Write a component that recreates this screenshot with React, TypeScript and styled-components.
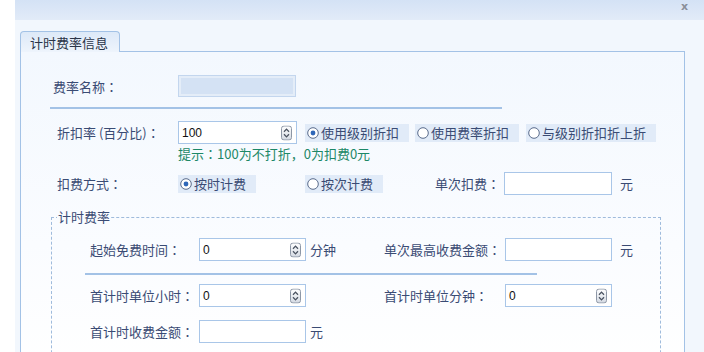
import React from 'react';
import styled, { createGlobalStyle } from 'styled-components';

const LABEL = '#3a4b74';
const LINE = '#a3c2e6';

const GlobalStyle = createGlobalStyle`
  html, body {
    margin: 0;
    padding: 0;
    background: #ffffff;
    overflow: hidden;
  }
  body {
    font-family: "Noto Sans CJK SC", "Noto Sans", sans-serif;
    font-size: 13px;
  }
`;

const Page = styled.div`
  width: 704px;
  height: 352px;
  display: flex;
  overflow: hidden;
  background: #ffffff;
`;

const Gutter = styled.div`
  width: 15px;
  flex: none;
  background: #ffffff;
`;

const Dialog = styled.div`
  flex: 1;
  display: flex;
  flex-direction: column;
  background: #f2f7fd;
`;

const TitleBar = styled.div`
  height: 20px;
  flex: none;
  display: flex;
  justify-content: flex-end;
  align-items: flex-start;
  padding-right: 16px;
  background: linear-gradient(#d4e2f5, #e2ebf8);
`;

const Close = styled.span`
  font-family: "DejaVu Sans", sans-serif;
  font-size: 11px;
  font-weight: bold;
  line-height: 14px;
  color: #8a8f99;
`;

const Body = styled.div`
  flex: 1;
  padding: 10px 19px 0 5px;
  display: flex;
  flex-direction: column;
`;

const TabStrip = styled.div`
  height: 21px;
  display: flex;
  align-items: flex-end;
`;

const Tab = styled.div`
  width: 100px;
  height: 21px;
  box-sizing: border-box;
  border: 1px solid ${LINE};
  border-bottom: none;
  border-radius: 4px 4px 0 0;
  background: linear-gradient(#dde9f8, #eef4fc);
  padding-left: 9px;
  line-height: 21px;
  color: #2a3448;
  margin-bottom: -1px;
  position: relative;
  z-index: 1;
`;

const Panel = styled.div`
  flex: 1;
  border: 1px solid ${LINE};
  border-bottom: none;
  background: linear-gradient(#f3f8fe, #fafcff 60%, #ffffff);
  display: flex;
  flex-direction: column;
`;

const Row = styled.div<{ $pad?: number; $top?: number; $h?: number }>`
  display: flex;
  align-items: center;
  height: ${p => p.$h ?? 23}px;
  margin-top: ${p => p.$top ?? 0}px;
  padding-left: ${p => p.$pad ?? 0}px;
  color: ${LABEL};
  white-space: nowrap;
`;

const Label = styled.span<{ $w: number }>`
  width: ${p => p.$w}px;
  flex: none;
  color: ${LABEL};
`;

const Colon = styled.span`
  font-family: "Noto Sans CJK TC", "Noto Sans CJK SC", sans-serif;
`;

const Cell = styled.div<{ $w: number }>`
  width: ${p => p.$w}px;
  flex: none;
  display: flex;
  align-items: center;
`;

const Rule = styled.div<{ $left: number; $top: number }>`
  width: 452px;
  height: 2px;
  margin-left: ${p => p.$left}px;
  margin-top: ${p => p.$top}px;
  background: ${LINE};
`;

const Box = styled.div<{ $w: number; $h?: number; $fill?: boolean }>`
  width: ${p => p.$w}px;
  height: ${p => p.$h ?? 23}px;
  box-sizing: border-box;
  flex: none;
  position: relative;
  border: 1px solid ${p => (p.$fill ? '#c3d6ee' : '#a9c6e8')};
  background: ${p => (p.$fill ? '#d4e2f4' : '#ffffff')};
  box-shadow: ${p => (p.$fill ? 'inset 0 0 0 2px #e4edf8' : 'none')};
  display: flex;
  align-items: center;
  padding-left: 3px;
  font-family: "Liberation Sans", Arial, sans-serif;
  font-size: 12px;
  color: #111;
`;

const SpinHolder = styled.span`
  position: absolute;
  right: 4px;
  top: 50%;
  transform: translateY(-50%);
  display: flex;
`;

const Unit = styled.span<{ $gap: number }>`
  margin-left: ${p => p.$gap}px;
  color: ${LABEL};
`;

const Chip = styled.span<{ $gap?: number }>`
  height: 18px;
  display: inline-flex;
  align-items: center;
  gap: 2px;
  padding: 0 10px 0 2px;
  margin-left: ${p => p.$gap ?? 0}px;
  background: #e1ebf8;
  color: ${LABEL};
`;

const Hint = styled.div`
  height: 18px;
  margin-bottom: 2px;
  display: flex;
  align-items: center;
  padding-left: 157px;
  color: #1d8867;
`;

const Fieldset = styled.fieldset`
  width: 610px;
  box-sizing: border-box;
  margin: 14px 0 0 30px;
  padding: 0 0 30px 0;
  border: 1px dashed #9fbbdc;
  border-bottom: none;
  min-width: 0;
`;

const Legend = styled.legend`
  margin-left: 5px;
  padding: 0 1px;
  line-height: 16px;
  color: ${LABEL};
`;

const Spinner = () => (
  <SpinHolder>
    <svg width="11" height="15" viewBox="0 0 11 15">
      <defs>
        <linearGradient id="sp" x1="0" y1="0" x2="0" y2="1">
          <stop offset="0" stopColor="#ffffff" />
          <stop offset="1" stopColor="#d3d9e2" />
        </linearGradient>
      </defs>
      <rect x="0.5" y="0.5" width="10" height="14" rx="2.5" fill="url(#sp)" stroke="#8d97a6" />
      <path d="M3 6.2 L5.5 3.6 L8 6.2" fill="none" stroke="#4a5260" strokeWidth="1.3" />
      <path d="M3 8.8 L5.5 11.4 L8 8.8" fill="none" stroke="#4a5260" strokeWidth="1.3" />
    </svg>
  </SpinHolder>
);

const Radio = ({ on }: { on?: boolean }) => (
  <svg width="12" height="12" viewBox="0 0 12 12">
    <circle cx="6" cy="6" r="5.3" fill="#ffffff" stroke="#5a6c8c" strokeWidth="1" />
    {on && <circle cx="6" cy="6" r="2.4" fill="#2f67b8" />}
  </svg>
);

const Field = ({ w, value, spin }: { w: number; value?: string; spin?: boolean }) => (
  <Box $w={w}>
    {value}
    {spin && <Spinner />}
  </Box>
);

const FieldLabel = ({ w, text }: { w: number; text: string }) => (
  <Label $w={w}>
    {text}
    <Colon>：</Colon>
  </Label>
);

export default function App() {
  return (
    <>
      <GlobalStyle />
      <Page>
        <Gutter />
        <Dialog>
          <TitleBar>
            <Close>x</Close>
          </TitleBar>
          <Body>
            <TabStrip>
              <Tab>计时费率信息</Tab>
            </TabStrip>
            <Panel>
              <Row $pad={32} $top={23} $h={22}>
                <FieldLabel w={125} text="费率名称" />
                <Box $w={118} $h={22} $fill />
              </Row>
              <Rule $left={29} $top={10} />
              <Row $pad={36} $top={12}>
                <FieldLabel w={121} text="折扣率 (百分比)" />
                <Field w={119} value="100" spin />
                <Chip $gap={8}>
                  <Radio on />
                  使用级别折扣
                </Chip>
                <Chip $gap={6}>
                  <Radio />
                  使用费率折扣
                </Chip>
                <Chip $gap={7}>
                  <Radio />
                  与级别折扣折上折
                </Chip>
              </Row>
              <Hint>提示<Colon>：</Colon>100为不打折，0为扣费0元</Hint>
              <Row $pad={36} $top={8}>
                <FieldLabel w={121} text="扣费方式" />
                <Cell $w={127}>
                  <Chip>
                    <Radio on />
                    按时计费
                  </Chip>
                </Cell>
                <Cell $w={130}>
                  <Chip>
                    <Radio />
                    按次计费
                  </Chip>
                </Cell>
                <FieldLabel w={69} text="单次扣费" />
                <Field w={108} />
                <Unit $gap={8}>元</Unit>
              </Row>
              <Fieldset>
                <Legend>计时费率</Legend>
                <Row $pad={38} $top={13}>
                  <FieldLabel w={109} text="起始免费时间" />
                  <Field w={107} value="0" spin />
                  <Cell $w={78}>
                    <Unit $gap={4}>分钟</Unit>
                  </Cell>
                  <FieldLabel w={121} text="单次最高收费金额" />
                  <Field w={107} />
                  <Unit $gap={8}>元</Unit>
                </Row>
                <Rule $left={33} $top={12} />
                <Row $pad={38} $top={9}>
                  <FieldLabel w={109} text="首计时单位小时" />
                  <Field w={107} value="0" spin />
                  <Cell $w={78} />
                  <FieldLabel w={121} text="首计时单位分钟" />
                  <Field w={107} value="0" spin />
                </Row>
                <Row $pad={38} $top={13}>
                  <FieldLabel w={109} text="首计时收费金额" />
                  <Field w={107} />
                  <Unit $gap={4}>元</Unit>
                </Row>
              </Fieldset>
            </Panel>
          </Body>
        </Dialog>
      </Page>
    </>
  );
}
